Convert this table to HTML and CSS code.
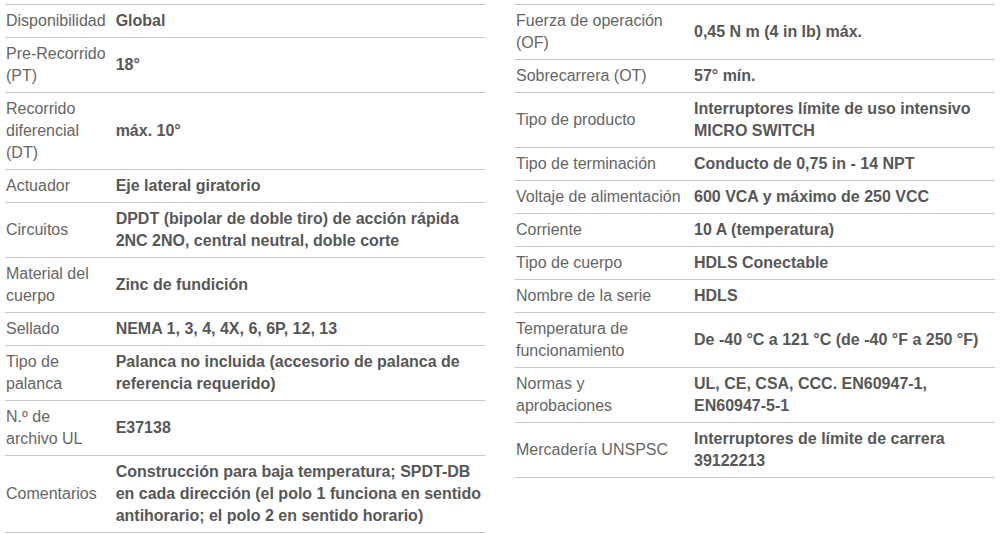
FILE: index.html
```html
<!DOCTYPE html>
<html lang="es">
<head>
<meta charset="utf-8">
<title>Especificaciones</title>
<link rel="stylesheet" href="styles.css">
</head>
<body>
<div class="specs">
  <table class="spec-table spec-left">
    <tbody>
      <tr><td class="label">Disponibilidad</td><td class="value">Global</td></tr>
      <tr><td class="label">Pre-Recorrido (PT)</td><td class="value">18°</td></tr>
      <tr><td class="label">Recorrido diferencial (DT)</td><td class="value">máx. 10°</td></tr>
      <tr><td class="label">Actuador</td><td class="value">Eje lateral giratorio</td></tr>
      <tr><td class="label">Circuitos</td><td class="value">DPDT (bipolar de doble tiro) de acción rápida 2NC 2NO, central neutral, doble corte</td></tr>
      <tr><td class="label">Material del cuerpo</td><td class="value">Zinc de fundición</td></tr>
      <tr><td class="label">Sellado</td><td class="value">NEMA 1, 3, 4, 4X, 6, 6P, 12, 13</td></tr>
      <tr><td class="label">Tipo de palanca</td><td class="value">Palanca no incluida (accesorio de palanca de referencia requerido)</td></tr>
      <tr><td class="label">N.º de archivo UL</td><td class="value">E37138</td></tr>
      <tr><td class="label">Comentarios</td><td class="value">Construcción para baja temperatura; SPDT-DB en cada dirección (el polo 1 funciona en sentido antihorario; el polo 2 en sentido horario)</td></tr>
    </tbody>
  </table>
  <table class="spec-table spec-right">
    <tbody>
      <tr><td class="label">Fuerza de operación (OF)</td><td class="value">0,45 N m (4 in lb) máx.</td></tr>
      <tr><td class="label">Sobrecarrera (OT)</td><td class="value">57° mín.</td></tr>
      <tr><td class="label">Tipo de producto</td><td class="value">Interruptores límite de uso intensivo MICRO SWITCH</td></tr>
      <tr><td class="label">Tipo de terminación</td><td class="value">Conducto de 0,75 in - 14 NPT</td></tr>
      <tr><td class="label">Voltaje de alimentación</td><td class="value">600 VCA y máximo de 250 VCC</td></tr>
      <tr><td class="label">Corriente</td><td class="value">10 A (temperatura)</td></tr>
      <tr><td class="label">Tipo de cuerpo</td><td class="value">HDLS Conectable</td></tr>
      <tr><td class="label">Nombre de la serie</td><td class="value">HDLS</td></tr>
      <tr><td class="label">Temperatura de funcionamiento</td><td class="value">De -40 °C a 121 °C (de -40 °F a 250 °F)</td></tr>
      <tr><td class="label">Normas y aprobaciones</td><td class="value">UL, CE, CSA, CCC. EN60947-1, EN60947-5-1</td></tr>
      <tr><td class="label">Mercadería UNSPSC</td><td class="value">Interruptores de límite de carrera 39122213</td></tr>
    </tbody>
  </table>
</div>
</body>
</html>
```

FILE: styles.css
```css
html, body {
  margin: 0;
  padding: 0;
  background: #ffffff;
}

body {
  font-family: "Liberation Sans", Arial, sans-serif;
  font-size: 16px;
  line-height: 22px;
  color: #666666;
}

.specs {
  display: grid;
  grid-template-columns: 480px 480px;
  column-gap: 30px;
  align-items: start;
  padding: 4px 5px 0 5px;
}

.spec-table {
  width: 100%;
  border-collapse: separate;
  border-spacing: 0;
  table-layout: auto;
}

.spec-table td {
  vertical-align: middle;
  border-bottom: 1px solid #c9c9c9;
  padding: 5px 1px;
}

.spec-table tr:first-child td {
  border-top: 1px solid #c9c9c9;
}

.label {
  color: #666666;
  font-weight: normal;
}

.value {
  color: #575757;
  font-weight: bold;
}

.spec-left .label {
  width: 1%;
  padding-right: 9px;
}

.spec-right .label {
  width: 167px;
  padding-right: 10px;
}
```
